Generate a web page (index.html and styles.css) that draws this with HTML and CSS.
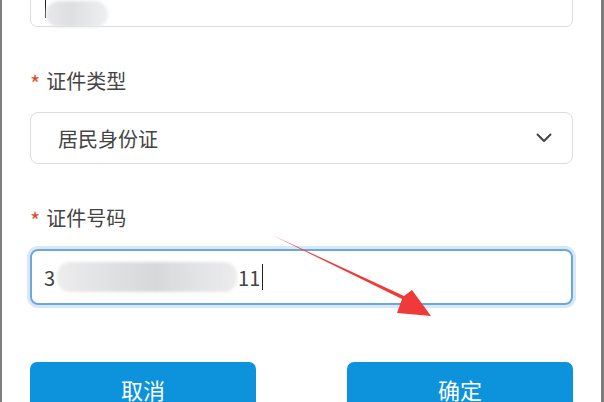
FILE: index.html
```html
<!DOCTYPE html>
<html>
  <head>
    <meta charset="UTF-8">
    <title>证件信息</title>
    <link rel="stylesheet" href="styles.css">
  </head>
  <body>
    <div class="frame">
      <div class="form">
        <!-- partly scrolled out name field -->
        <div class="input top-input">
          <span class="caret"></span>
          <span class="blur blur-name"></span>
        </div>

        <div class="field">
          <div class="label"><span class="star">*</span>证件类型</div>
          <div class="input select">
            <span class="value">居民身份证</span>
            <svg class="chevron" width="16" height="10" viewBox="0 0 16 10">
              <path d="M1.5 1.5 L8 8 L14.5 1.5" fill="none" stroke="#444" stroke-width="2" stroke-linecap="round" stroke-linejoin="round"/>
            </svg>
          </div>
        </div>

        <div class="field">
          <div class="label"><span class="star">*</span>证件号码</div>
          <div class="input focused">
            <span class="value">3</span>
            <span class="blur blur-id"></span>
            <span class="value">11</span>
            <span class="caret caret-text"></span>
          </div>
        </div>

        <div class="buttons">
          <button class="btn">取消</button>
          <button class="btn">确定</button>
        </div>
      </div>

      <svg class="arrow" width="604" height="402" viewBox="0 0 604 402">
        <polygon points="272,235 402,299 397,313 431,316 412,290 404,296" fill="#f03a3a"/>
      </svg>
    </div>
  </body>
</html>
```

FILE: styles.css
```css
body {
  margin: 0;
  padding: 0;
  background: #fff;
  font-family: "Noto Sans CJK SC", "Noto Sans", sans-serif;
  color: #333;
}

.frame {
  position: relative;
  width: 604px;
  height: 402px;
  box-sizing: border-box;
  border-left: 2px solid #7d7d7d;
  border-right: 3px solid #7d7d7d;
  overflow: hidden;
}

.form {
  display: flex;
  flex-direction: column;
  padding: 0 28px 0 28px;
  margin-top: -26px;
}

.input {
  display: flex;
  align-items: center;
  height: 52px;
  box-sizing: border-box;
  border: 1px solid #dcdcdc;
  border-radius: 7px;
  padding: 0 14px;
  font-size: 20px;
  color: #444;
}

.top-input {
  height: 53px;
}

.caret {
  width: 1px;
  height: 22px;
  background: #222;
  align-self: flex-start;
  margin-top: 21px;
}

.caret-text {
  align-self: center;
  margin: 0 0 0 2px;
  height: 26px;
}

.blur {
  display: inline-block;
  height: 26px;
  border-radius: 13px;
  background: linear-gradient(90deg, #e8e8ea 0%, #dedfe2 40%, #eeeff0 100%);
  filter: blur(1.5px);
}

.blur-name {
  width: 62px;
  margin-top: 26px;
  margin-left: 0;
}

.field {
  display: flex;
  flex-direction: column;
}

.label {
  display: flex;
  align-items: center;
  height: 28px;
  margin-top: 39px;
  margin-bottom: 18px;
  font-size: 20px;
  color: #444;
}

.star {
  color: #d9502a;
  font-size: 22px;
  line-height: 1;
  margin: 4px 6px 0 0;
}

.select {
  padding-left: 27px;
  padding-right: 20px;
  justify-content: space-between;
  border-radius: 8px;
}

.focused {
  height: 56px;
  border: 2px solid #6da5dd;
  box-shadow: 0 0 0 3px #d7e8f7;
  border-radius: 8px;
  padding-left: 12px;
}

.blur-id {
  width: 180px;
  height: 30px;
  margin: 0 1px 0 2px;
  background: linear-gradient(90deg, #ededee 0%, #dfe0e2 30%, #d7d8da 55%, #e3e4e6 80%, #ececed 100%);
}

.buttons {
  display: flex;
  justify-content: space-between;
  margin-top: 57px;
}

.btn {
  width: 226px;
  height: 54px;
  border: none;
  border-radius: 7px;
  background: #0d92dc;
  color: #fff;
  font-family: "Noto Sans CJK SC", sans-serif;
  font-size: 22px;
  padding: 0;
}

.arrow {
  position: absolute;
  left: -2px;
  top: 0;
  pointer-events: none;
}
```
